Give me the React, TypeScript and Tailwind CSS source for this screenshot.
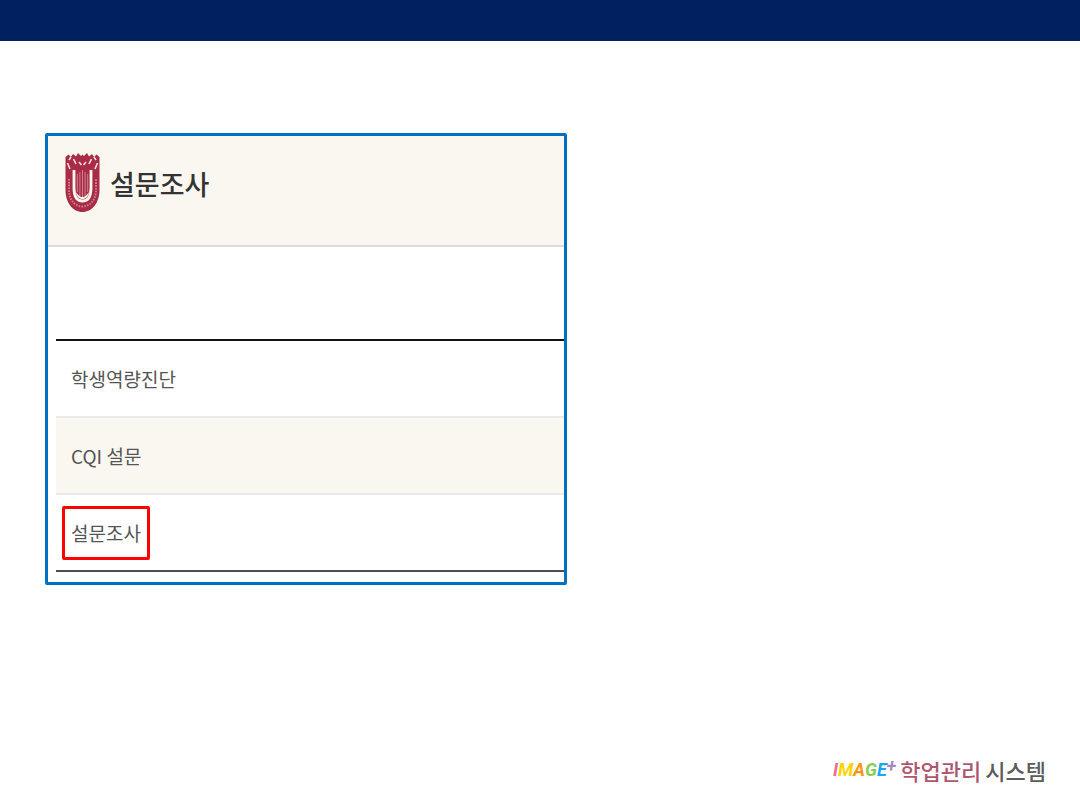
import { clsx } from "clsx";

interface Survey {
  id: number;
  name: string;
  selected?: boolean;
}

const surveys: Survey[] = [
  { id: 1, name: "학생역량진단" },
  { id: 2, name: "CQI 설문" },
  { id: 3, name: "설문조사", selected: true },
];

export default function App() {
  return (
    <div className="flex min-h-screen flex-col bg-white font-['Noto_Sans_CJK_KR',sans-serif]">
      <header className="h-[41px] bg-[#002060]" />
      <main className="px-[45px] pt-[92px]">
        <SurveyPanel />
      </main>
      <footer className="mt-auto flex justify-end px-[34px] pb-6">
        <SystemLogo />
      </footer>
    </div>
  );
}

function SurveyPanel() {
  return (
    <section className="w-full max-w-[522px] rounded-[2px] border-[3px] border-[#0070c0] bg-white">
      <div className="flex items-start gap-[10px] border-b-2 border-[#dcdbd9] bg-[#faf7f0] px-[17px] pt-4 pb-[31px]">
        <Emblem />
        <h1 className="pt-[2px] text-[27px] leading-[60px] font-medium text-[#333333]">설문조사</h1>
      </div>
      <div className="pt-[92px] pb-[10px] pl-2">
        <ul className="border-t-2 border-b-2 border-t-[#111111] border-b-[#4b4e57]">
          {surveys.map((survey) => (
            <SurveyRow key={survey.id} survey={survey} />
          ))}
        </ul>
      </div>
    </section>
  );
}

function SurveyRow({ survey }: { survey: Survey }) {
  return (
    <li className="flex h-[77px] items-center border-b-2 border-[#ebeaea] px-[6px] last:h-[75px] last:border-b-0 even:bg-[#faf7f0]">
      <a
        href="#"
        className={clsx(
          "border-[3px] px-[6px] text-[19px] leading-[48px] text-[#555555]",
          survey.selected ? "rounded-[2px] border-[#ff0000]" : "border-transparent",
        )}
      >
        {survey.name}
      </a>
    </li>
  );
}

function Emblem() {
  return (
    <svg className="h-[61px] w-[35px]" viewBox="0 0 35 61" aria-hidden="true">
      <path
        d="M0.5 5 L3.5 2.5 L6 5 L8 2 L11 4.5 L13 1 L16 4 L17.5 2.5 L19 4 L22 1 L24 4.5 L27 2 L29 5 L31.5 2.5 L34.5 5 V38 C34.5 51 27 60 17.5 60 C8 60 0.5 51 0.5 38 Z"
        fill="#a92b45"
      />
      <path
        d="M9 18 V36 C9 45 12 49 17.5 49 C23 49 26 45 26 36 V18"
        fill="none"
        stroke="#faf7f0"
        strokeWidth="2.8"
      />
      <path
        d="M2.5 11 L5 17 M8.5 7 L11 12 M6 5 L4 8 M29 5 L31 8 M14 10 L16.5 13 M21 10 L18.5 13 M26.5 7 L24 12 M32.5 11 L30 17"
        stroke="#f3dfdc"
        strokeWidth="1.6"
      />
      <path
        d="M12.3 22 V40 M14.9 20 V44 M17.5 18 V46 M20.1 20 V44 M22.7 22 V40"
        stroke="#d28c97"
        strokeWidth="0.9"
      />
      <path
        d="M11 40 C12 45 14 47 17.5 47 C21 47 23 45 24 40 C22 43 20 45 17.5 45 C15 45 13 43 11 40 Z"
        fill="#faf7f0"
      />
      <path
        d="M4 27 V38 C4 48 10 54.5 17.5 54.5 C25 54.5 31 48 31 38 V27"
        fill="none"
        stroke="#c97f8c"
        strokeWidth="2"
        strokeDasharray="1.6 1.2"
      />
    </svg>
  );
}

function SystemLogo() {
  return (
    <div className="flex items-center gap-1 text-[22px] leading-8">
      <span className="flex font-[Roboto,sans-serif] text-lg leading-8 font-bold italic">
        <span className="text-[#f5678f]">I</span>
        <span className="text-[#ffd400]">M</span>
        <span className="text-[#ff9414]">A</span>
        <span className="text-[#86cf4f]">G</span>
        <span className="text-[#18a8ee]">E</span>
        <sup className="top-0 text-lg leading-6 text-[#a98abf]">+</sup>
      </span>
      <span className="font-medium text-[#ad5870]">학업관리</span>
      <span className="font-medium text-[#5b5c5e]">시스템</span>
    </div>
  );
}
